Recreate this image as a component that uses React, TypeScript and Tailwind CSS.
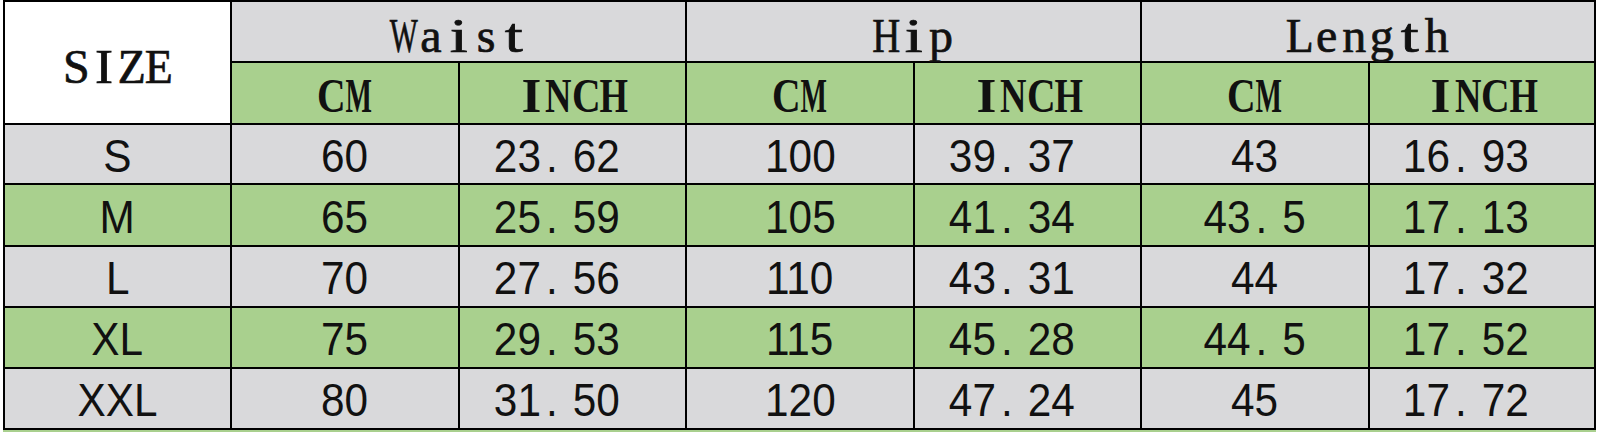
const GRAY = "bg-[#d9d9db]";
const GREEN = "bg-[#a9d08e]";

const rows = [
  { size: "S", v: ["60", "23.62", "100", "39.37", "43", "16.93"] },
  { size: "M", v: ["65", "25.59", "105", "41.34", "43.5", "17.13"] },
  { size: "L", v: ["70", "27.56", "110", "43.31", "44", "17.32"] },
  { size: "XL", v: ["75", "29.53", "115", "45.28", "44.5", "17.52"] },
  { size: "XXL", v: ["80", "31.50", "120", "47.24", "45", "17.72"] },
];

// advance widths (em) of Liberation Serif, to fit letters into half-width cells
const EM: Record<string, number> = {
  W: 0.944, M: 0.944, H: 0.722, N: 0.722, C: 0.667, Z: 0.611, E: 0.611, L: 0.611,
  S: 0.556, I: 0.333, a: 0.444, i: 0.278, s: 0.389, t: 0.278, p: 0.5, e: 0.444,
  n: 0.5, g: 0.5, h: 0.5,
};

const Head = ({ text, bold }: { text: string; bold?: boolean }) => (
  <span
    className={`inline-flex font-['Liberation_Serif','Times_New_Roman',serif] text-[48px] leading-none text-[#111] ${bold ? "font-bold" : "[-webkit-text-stroke:0.7px_#111]"}`}
  >
    {text.split("").map((c, i) => {
      const w = (EM[c] ?? 0.5) * 48 * (bold ? 1.06 : 1);
      const s = w > 28 ? 28 / w : w < 18 ? Math.min(1.35, 18 / w) : 1;
      return (
        <span key={i} className="inline-flex w-[27.5px] justify-center">
          <span className="inline-block" style={{ transform: `scaleX(${s})` }}>
            {c}
          </span>
        </span>
      );
    })}
  </span>
);

// the sheet uses a half-width font: the dot gets its own cell, INCH values carry a trailing blank
const Num = ({ value }: { value: string }) => {
  const [a, b] = value.split(".");
  return (
    <span className={`whitespace-nowrap ${b && b.length > 1 ? "pr-[0.75em]" : ""}`}>
      {a}
      {b !== undefined && (
        <>
          <span className="inline-block w-[0.75em] pl-[0.12em] text-left">.</span>
          {b}
        </>
      )}
    </span>
  );
};

const Cell = ({ bg, children }: { bg: string; children: React.ReactNode }) => (
  <div
    className={`${bg} flex items-center justify-center pt-[3px] font-['Liberation_Sans',Arial,sans-serif] text-[46px] leading-none text-[#111]`}
  >
    <span className="inline-block scale-x-[0.92]">{children}</span>
  </div>
);

export default function App() {
  return (
    <div className="h-[432px] w-[1600px] overflow-hidden bg-white pl-[3px]">
      <div className="grid w-fit grid-cols-[225px_226px_225px_226px_225px_226px_224px] grid-rows-[59px_60px_58px_60px_59px_59px_59px] gap-[2px] bg-black p-[2px]">
        <div className="row-span-2 flex items-center justify-center bg-white pt-[8px]">
          <Head text="SIZE" />
        </div>
        {["Waist", "Hip", "Length"].map((h) => (
          <div
            key={h}
            className={`col-span-2 flex items-center justify-center ${GRAY} pt-[9px]`}
          >
            <Head text={h} />
          </div>
        ))}
        {["CM", "INCH", "CM", "INCH", "CM", "INCH"].map((u, i) => (
          <div
            key={i}
            className={`flex items-center justify-center ${GREEN} pt-[6px]`}
          >
            <Head text={u} bold />
          </div>
        ))}
        {rows.map((r, ri) => {
          const bg = ri % 2 === 0 ? GRAY : GREEN;
          return [
            <Cell key={r.size} bg={bg}>
              {r.size}
            </Cell>,
            ...r.v.map((v, ci) => (
              <Cell key={r.size + ci} bg={bg}>
                <Num value={v} />
              </Cell>
            )),
          ];
        })}
      </div>
      <div className={`h-[4px] w-[1593px] ${GREEN}`} />
    </div>
  );
}
